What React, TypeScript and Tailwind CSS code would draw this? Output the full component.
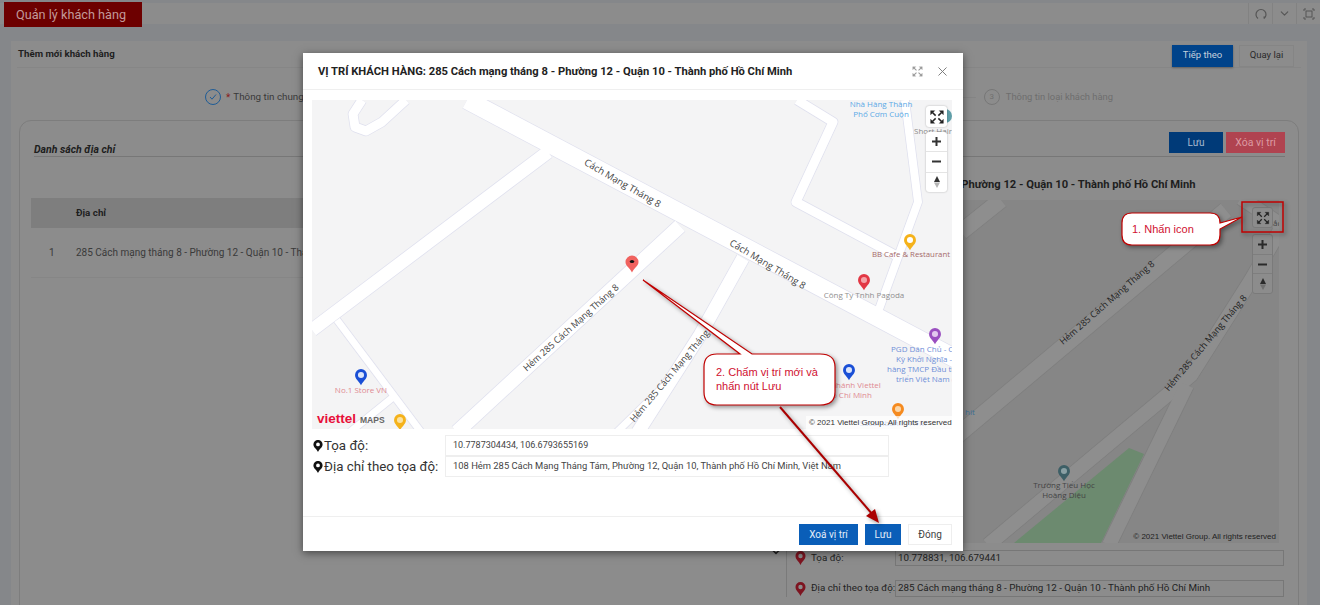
import { ChevronDown, X } from 'lucide-react'

const road = (d: string, w: number, key: string) => (
    <path key={key} d={d} fill="none" stroke="#dfe0ee" strokeWidth={w + 1.5} strokeLinejoin="round" />
)
const roadTop = (d: string, w: number, key: string) => (
    <path key={key} d={d} fill="none" stroke="#ffffff" strokeWidth={w} strokeLinejoin="round" />
)

function Pin({ x, y, color, s = 1, dot = '#ffffff' }: { x: number; y: number; color: string; s?: number; dot?: string }) {
    return (
        <g transform={`translate(${x} ${y}) scale(${s})`}>
            <path d="M0 12 C-2.5 7.5 -7 4.5 -7 0 A7 7 0 1 1 7 0 C7 4.5 2.5 7.5 0 12Z" fill={color} />
            <circle cx="0" cy="0" r="3.6" fill={dot} />
        </g>
    )
}

function FullIcon({ color = '#222222', size = 22 }: { color?: string; size?: number }) {
    return (
        <svg width={size} height={size} viewBox="0 0 22 22" fill={color} stroke={color}>
            {/* four corner arrows */}
            <path d="M4 4h4.5L4 8.5z M18 4h-4.5L18 8.5z M4 18h4.5L4 13.5z M18 18h-4.5L18 13.5z" strokeWidth="0.4" />
            <path d="M6 6l3.5 3.5 M16 6l-3.5 3.5 M6 16l3.5-3.5 M16 16l-3.5-3.5" strokeWidth="1.6" fill="none" />
        </svg>
    )
}

function ZoomGroup({ dim }: { dim?: boolean }) {
    const ink = dim ? '#2a2a2a' : '#333333'
    return (
        <div className={`flex h-[60px] w-[21px] flex-col rounded-[3px] ${dim ? 'border border-[#7a7a7a] bg-[#8c8c8c]' : 'bg-white shadow-[0_0_2px_rgba(0,0,0,0.3)]'}`}>
            <div className={`flex flex-1 items-center justify-center border-b ${dim ? 'border-[#7e7e7e]' : 'border-[#e4e4e4]'}`}>
                <svg width="11" height="11" viewBox="0 0 11 11"><path d="M5.5 1v9M1 5.5h9" stroke={ink} strokeWidth="2" /></svg>
            </div>
            <div className={`flex flex-1 items-center justify-center border-b ${dim ? 'border-[#7e7e7e]' : 'border-[#e4e4e4]'}`}>
                <svg width="11" height="11" viewBox="0 0 11 11"><path d="M1 5.5h9" stroke={ink} strokeWidth="2" /></svg>
            </div>
            <div className="flex flex-1 items-center justify-center">
                <svg width="8" height="14" viewBox="0 0 8 14">
                    <path d="M4 1L7 7H1z" fill={ink} />
                    <path d="M4 13L7 7.6H1z" fill={dim ? '#6f6f6f' : '#b5b5b5'} />
                </svg>
            </div>
        </div>
    )
}

function ModalMap() {
    const roads: [string, number][] = [
        ['M467 100L960 361', 18],
        ['M312 330L548 152', 13],
        ['M337 320L421 432', 7],
        ['M392 398L350 432', 7],
        ['M680 226L457 432', 14],
        ['M638 432L700 335L743 258', 13],
        ['M617 432L662 388', 7],
        ['M797 100L833 122L796 202L895 255', 9],
        ['M905 100L918 202L878 312', 8],
        ['M362 100L353 114L355 127L366 131L382 122L406 100', 9],
    ]
    return (
        <div className="relative mt-[10px] ml-[9px] h-[329px] w-[640px] overflow-hidden bg-[#f4f4f5]">
            <svg className="block" width="640" height="329" viewBox="312 100 640 329" fontFamily="'Open Sans', sans-serif">
                {roads.map(([d, w], i) => road(d, w, `o${i}`))}
                {roads.map(([d, w], i) => roadTop(d, w, `t${i}`))}

                <text x="621" y="186" transform="rotate(30 621 186)" textAnchor="middle" fontSize="9.5" fill="#444">Cách Mạng Tháng 8</text>
                <text x="766" y="267" transform="rotate(31 766 267)" textAnchor="middle" fontSize="9.5" fill="#444">Cách Mạng Tháng 8</text>
                <text x="573" y="330" transform="rotate(-42 573 330)" textAnchor="middle" fontSize="9.2" fill="#444">Hẻm 285 Cách Mạng Tháng 8</text>
                <text x="672" y="378" transform="rotate(-50 672 378)" textAnchor="middle" fontSize="9.2" fill="#444">Hẻm 285 Cách Mạng Tháng</text>

                <text x="881" y="107" textAnchor="middle" fontSize="8" fill="#5aa9e6">Nhà Hàng Thành</text>
                <text x="881" y="117" textAnchor="middle" fontSize="8" fill="#5aa9e6">Phố Cơm Cuộn</text>
                <circle cx="945" cy="116" r="7" fill="#5f9ea8" />
                <text x="933" y="134" textAnchor="middle" fontSize="8" fill="#8a8a8a">Short Hair</text>

                <Pin x={910} y={240} color="#f5b21a" s={0.85} />
                <text x="911" y="257" textAnchor="middle" fontSize="7.8" fill="#a56a6a">BB Cafe &amp; Restaurant</text>
                <Pin x={864} y={280} color="#e23744" s={0.85} dot="#f4a3a8" />
                <text x="864" y="298" textAnchor="middle" fontSize="8" fill="#8f8f8f">Công Ty Tnhh Pagoda</text>
                <Pin x={935} y={334} color="#9a4fc0" s={0.85} dot="#e2c8ee" />
                <g fontSize="8" fill="#6f8fd8">
                    <text x="891" y="352">PGD Dân Chủ - Chi nhánh</text>
                    <text x="896" y="362">Kỳ Khởi Nghĩa -</text>
                    <text x="887" y="372">hàng TMCP Đầu tư và Phát</text>
                    <text x="896" y="382">triển Việt Nam (BIDV)</text>
                </g>
                <Pin x={849} y={370} color="#1a4fd6" s={0.85} dot="#dbe5fb" />
                <text x="849" y="388" textAnchor="middle" fontSize="8" fill="#e08a92">Chi nhánh Viettel</text>
                <text x="849" y="398" textAnchor="middle" fontSize="8" fill="#e08a92">Hồ Chí Minh</text>
                <Pin x={898} y={409} color="#f58a1f" s={0.85} dot="#fbd6a8" />
                <text x="893" y="426" textAnchor="middle" fontSize="8" fill="#6f8fd8">Sacombank - ATM</text>

                <Pin x={361} y={375} color="#1a4fd6" s={0.85} dot="#dbe5fb" />
                <text x="361" y="393" textAnchor="middle" fontSize="8" fill="#e08a92">No.1 Store VN</text>
                <Pin x={400} y={420} color="#f5b21a" s={0.85} dot="#fbe2a0" />

                <text x="317" y="423" fontFamily="'Liberation Sans', sans-serif" fontWeight="700" fontSize="13.5" fill="#e8103a">viettel</text>
                <text x="360" y="423" fontFamily="'Liberation Sans', sans-serif" fontWeight="700" fontSize="8.5" fill="#666">MAPS</text>

                {/* marker */}
                <g transform="translate(632 262)">
                    <path d="M0 10.5 C-2 6 -6.5 4 -6.5 0 A6.5 6.5 0 1 1 6.5 0 C6.5 4 2 6 0 10.5Z" fill="#f0625f" />
                    <ellipse cx="0" cy="-0.5" rx="2.2" ry="1.5" fill="#111" />
                </g>
            </svg>
            <div className="absolute right-0 bottom-0 w-[146px] bg-white/70 pl-[3px] font-['Liberation_Sans',sans-serif] text-[8px] leading-[13px] whitespace-nowrap text-[#333]">© 2021 Viettel Group. All rights reserved</div>
            <div className="absolute top-[6px] right-[5px] flex flex-col gap-[5px]">
                <div className="flex h-[21px] w-[21px] items-center justify-center rounded-[3px] bg-white shadow-[0_0_2px_rgba(0,0,0,0.3)]"><FullIcon size={20} /></div>
                <ZoomGroup />
            </div>
        </div>
    )
}

function DimMap() {
    const roads: [string, number][] = [
        ['M790 575L1225 210', 16],
        ['M987 545L1190 375L1250 280L1282 225', 14],
        ['M1108 545L1186 385', 14],
        ['M1240 198L1282 226', 14],
        ['M960 232L1000 200', 16],
    ]
    return (
        <div className="relative h-[343px] w-[492px] overflow-hidden bg-[#868686]">
            <svg className="block" width="492" height="343" viewBox="786 200 492 343" fontFamily="'Open Sans', sans-serif">
                {roads.map(([d, w], i) => <path key={`a${i}`} d={d} fill="none" stroke="#7e7e7e" strokeWidth={w + 1.5} />)}
                {roads.map(([d, w], i) => <path key={`b${i}`} d={d} fill="none" stroke="#8e8e8e" strokeWidth={w} />)}
                <path d="M1013 543H1100L1143 454L1128 448Z" fill="#6c8a6f" />
                <text x="1108" y="305" transform="rotate(-41 1108 305)" textAnchor="middle" fontSize="9" fill="#222">Hẻm 285 Cách Mạng Tháng 8</text>
                <text x="1207" y="345" transform="rotate(-50 1207 345)" textAnchor="middle" fontSize="9" fill="#222">Hẻm 285 Cách Mạng Tháng 8</text>
                <text x="964" y="415" fontSize="8" fill="#3f6f96">hít</text>
                <text x="1272" y="226" fontSize="8" fill="#444">ắc</text>
                <Pin x={1063} y={471} color="#3d5f66" s={0.85} dot="#8aa0a4" />
                <text x="1063" y="488" textAnchor="middle" fontSize="8" fill="#444">Trường Tiểu Học</text>
                <text x="1063" y="498" textAnchor="middle" fontSize="8" fill="#444">Hoàng Diệu</text>
            </svg>
            <div className="absolute right-[3px] bottom-0 font-['Liberation_Sans',sans-serif] text-[8px] leading-[13px] whitespace-nowrap text-[#222]">© 2021 Viettel Group. All rights reserved</div>
            <div className="absolute top-[7px] right-[6px] flex flex-col gap-[6px]">
                <div className="flex h-[21px] w-[21px] items-center justify-center rounded-[3px] border border-[#7a7a7a] bg-[#8c8c8c]"><FullIcon size={18} /></div>
                <ZoomGroup dim />
            </div>
        </div>
    )
}

function PanelPin() {
    return (
        <svg width="11" height="14" viewBox="0 0 11 14" className="shrink-0">
            <path fillRule="evenodd" d="M5.5 14C4 10.5 .5 8.5 .5 5a5 5 0 0 1 10 0c0 3.500-3.500 5.500-5 9zM5.500 7.200a2.200 2.200 0 1 0 0-4.400 2.200 2.200 0 0 0 0 4.400z" fill="#7d1420" />
        </svg>
    )
}

function ModalPin() {
    return (
        <svg width="10" height="12" viewBox="0 0 10 12" className="shrink-0">
            <path fillRule="evenodd" d="M5 12C3.800 9 .4 7.500 .4 4.500a4.600 4.600 0 0 1 9.200 0C9.600 7.500 6.200 9 5 12zM5 6.300a1.900 1.900 0 1 0 0-3.800 1.900 1.900 0 0 0 0 3.800z" fill="#111" />
        </svg>
    )
}

function Modal() {
    return (
        <div className="absolute top-[53px] left-[303px] flex h-[498px] w-[660px] flex-col bg-white shadow-[0_2px_8px_rgba(0,0,0,0.5)]">
            <div className="flex h-[37px] shrink-0 items-center justify-between border-b border-[#efefef] pr-[13px] pl-[15px]">
                <span className="pt-[3px] text-[11.2px] font-bold text-[#222]">VỊ TRÍ KHÁCH HÀNG: 285 Cách mạng tháng 8 - Phường 12 - Quận 10 - Thành phố Hồ Chí Minh</span>
                <div className="flex items-center gap-[10px]">
                    <FullIcon color="#9a9a9a" size={15} />
                    <X size={15} color="#777" strokeWidth={1.5} />
                </div>
            </div>
            <ModalMap />
            <div className="flex flex-1 flex-col pt-[6px] pl-[10px]">
                <div className="flex items-center">
                    <div className="flex w-[132px] items-center gap-px">
                        <ModalPin />
                        <span className="text-[13.3px] leading-5 text-[#333]">Tọa độ:</span>
                    </div>
                    <div className="flex h-[21px] w-[444px] items-center border border-[#eeeeee] pl-[7px] text-[9px] text-[#444]">10.7787304434, 106.6793655169</div>
                </div>
                <div className="flex items-center">
                    <div className="flex w-[132px] items-center gap-px">
                        <ModalPin />
                        <span className="text-[13.3px] leading-5 whitespace-nowrap text-[#333]">Địa chỉ theo tọa độ:</span>
                    </div>
                    <div className="flex h-[21px] w-[444px] items-center border border-[#eeeeee] pl-[7px] text-[9.4px] text-[#444]">108 Hẻm 285 Cách Mạng Tháng Tám, Phường 12, Quận 10, Thành phố Hồ Chí Minh, Việt Nam</div>
                </div>
            </div>
            <div className="flex h-[35px] shrink-0 items-center justify-end gap-[7px] border-t border-[#efefef] pr-[11px]">
                <button className="flex h-[21px] w-[59px] items-center justify-center bg-[#0a5eb8] text-[10px] text-[#e3edf8]">Xoá vị trí</button>
                <button className="flex h-[21px] w-[36px] items-center justify-center bg-[#0a5eb8] text-[10px] text-[#e3edf8]">Lưu</button>
                <button className="flex h-[21px] w-[44px] items-center justify-center border border-[#eeeeee] bg-white text-[10px] text-[#444]">Đóng</button>
            </div>
        </div>
    )
}

function Annotations() {
    return (
        <>
            <svg className="absolute top-0 left-0" width="1320" height="605" viewBox="0 0 1320 605">
                <g className="drop-shadow-[2px_2px_2px_rgba(0,0,0,0.4)]">
                    <rect x="1242" y="202" width="41" height="30" fill="none" stroke="#c00000" strokeWidth="1.5" />
                    <path d="M1132 213H1210Q1220 213 1220 223L1242 217L1220 229V235Q1220 245 1210 245H1132Q1122 245 1122 235V223Q1122 213 1132 213Z" fill="#fff" stroke="#c00000" strokeWidth="1.2" />
                    <path d="M717 354H740L643 280L752 354H820Q835 354 835 367V392Q835 405 820 405H717Q704 405 704 392V367Q704 354 717 354Z" fill="#fff" stroke="#c00000" strokeWidth="1.2" />
                    <path d="M780 407L873 515" stroke="#aa0000" strokeWidth="2" fill="none" />
                    <path d="M879 523L866 516L875 509Z" fill="#aa0000" />
                </g>
            </svg>
            <div className="absolute top-[222px] left-[1132px] font-['Liberation_Sans',sans-serif] text-[11px] leading-[14px] text-[#d01030]">1. Nhấn icon</div>
            <div className="absolute top-[366px] left-[716px] font-['Liberation_Sans',sans-serif] text-[11px] leading-[13.5px] text-[#d01030]">2. Chấm vị trí mới và<br />nhấn nút Lưu</div>
        </>
    )
}

export default function App() {
    return (
        <div className="relative h-[605px] w-[1320px] overflow-hidden bg-[#85878a] font-['Roboto',sans-serif]">
            {/* Top bar */}
            <div className="mt-[3px] flex h-[21px] items-start justify-between bg-[#8c8c8c]">
                <div className="-mt-px ml-[4px] flex h-[25px] w-[138px] items-center bg-[#6d0000] pl-[12px] text-[12.7px] text-[#c29a9a]">Quản lý khách hàng</div>
                <div className="flex h-[21px] text-[#555]">
                    <div className="flex w-[24px] items-center justify-center border-l border-[#828282]">
                        <svg width="12" height="12" viewBox="0 0 12 12" fill="none"><path d="M3 10.500A5 5 0 1 1 9 10.500M9 10.500l.3-2.200" stroke="#555" strokeWidth="1.2" /></svg>
                    </div>
                    <div className="flex w-[24px] items-center justify-center border-l border-[#828282]"><ChevronDown size={13} /></div>
                    <div className="flex w-[24px] items-center justify-center border-l border-[#828282]">
                        <svg width="12" height="12" viewBox="0 0 12 12" fill="none" stroke="#555"><path d="M1 3V1H3M9 1H11V3M11 9V11H9M3 11H1V9" /><rect x="3" y="3" width="6" height="6" /></svg>
                    </div>
                </div>
            </div>

            {/* Main card */}
            <div className="mt-[17px] ml-[11px] h-[564px] w-[1296px] bg-[#8c8c8c] px-[6px]">
                <div className="flex h-[27px] items-center justify-between border-b border-[#868686]">
                    <span className="pl-px text-[9.7px] font-bold text-[#1e1e1e]">Thêm mới khách hàng</span>
                    <div className="flex items-center gap-[6px] pt-[3px] pr-[7px]">
                        <button className="flex h-[22px] w-[61px] items-center justify-center bg-[#00438a] text-[9.5px] text-[#c5d0dc] shadow-[0_1px_2px_rgba(0,0,0,0.3)]">Tiếp theo</button>
                        <button className="flex h-[22px] w-[55px] items-center justify-center border border-[#858585] text-[9.5px] text-[#2a2a2a]">Quay lại</button>
                    </div>
                </div>

                {/* Stepper */}
                <div className="flex h-[52px] items-center pt-[6px] pr-[188px] pl-[188px]">
                    <div className="flex h-4 w-4 shrink-0 items-center justify-center rounded-full border border-[#1f5c96]">
                        <svg width="8" height="8" viewBox="0 0 8 8" fill="none"><path d="M1 4l2 2.200L7 1.500" stroke="#1f5c96" /></svg>
                    </div>
                    <span className="ml-[5px] text-[10px] text-[#8a1c1c]">*</span>
                    <span className="ml-[3px] text-[9.8px] whitespace-nowrap text-[#3a3a3a]">Thông tin chung</span>
                    <div className="mx-2 h-px flex-1 bg-[#858585]" />
                    <div className="flex h-4 w-4 shrink-0 items-center justify-center rounded-full border border-[#777] text-[8px] text-[#707070]">3</div>
                    <span className="ml-[6px] text-[9.4px] whitespace-nowrap text-[#6e6e6e]">Thông tin loại khách hàng</span>
                </div>

                {/* Inner card */}
                <div className="mx-[2px] h-[500px] rounded-t-xl border border-[#7d7d7d] px-[11px] pt-[11px]">
                    <div className="ml-[3px] flex h-[25px] w-[1251px] items-start justify-between border-b border-[#777]">
                        <span className="pt-[11px] text-[10.5px] leading-[13px] font-bold text-[#1e1e1e] italic">Danh sách địa chỉ</span>
                        <div className="flex gap-[3px]">
                            <button className="flex h-[21px] w-[54px] items-center justify-center bg-[#003a78] text-[10px] text-[#a9bad0]">Lưu</button>
                            <button className="flex h-[21px] w-[59px] items-center justify-center bg-[#b04350] text-[10.5px] text-[#dc9aa2]">Xóa vị trí</button>
                        </div>
                    </div>
                    <div className="flex">
                        <div className="w-[755px] pt-[41px]">
                            <div className="flex h-[30px] items-center bg-[#7e7e7e] pl-[45px] text-[9.8px] font-bold text-[#1e1e1e]">Địa chỉ</div>
                            <div className="flex h-[50px] items-center border-b border-[#868686] text-[10px] text-[#3a3a3a]">
                                <span className="w-[45px] pl-[18px]">1</span>
                                <span>285 Cách mạng tháng 8 - Phường 12 - Quận 10 - Thành phố Hồ Chí Minh</span>
                            </div>
                            <div className="mt-[268px] flex justify-end pr-[4px]"><ChevronDown size={12} color="#222" strokeWidth={3} /></div>
                        </div>
                        <div className="flex-1 border-l border-[#7a7a7a]">
                            <div className="h-[43px] pt-[21px] pl-[45px] text-[11.2px] leading-[14px] font-bold whitespace-nowrap text-[#1e1e1e]">285 Cách mạng tháng 8 - Phường 12 - Quận 10 - Thành phố Hồ Chí Minh</div>
                            <DimMap />
                            <div className="mt-[7px] mr-[3px] flex h-[16px] items-center pl-[8px]">
                                <PanelPin />
                                <span className="ml-[5px] w-[84px] text-[9.8px] text-[#222]">Tọa độ:</span>
                                <div className="flex h-[16px] flex-1 items-center border border-[#777] pl-[2px] text-[9.8px] text-[#222]">10.778831, 106.679441</div>
                            </div>
                            <div className="mt-[14px] mr-[3px] flex h-[17px] items-center pl-[8px]">
                                <PanelPin />
                                <span className="ml-[5px] w-[84px] text-[9.8px] whitespace-nowrap text-[#222]">Địa chỉ theo tọa độ:</span>
                                <div className="flex h-[17px] flex-1 items-center border border-[#777] pl-[2px] text-[9.8px] text-[#222]">285 Cách mạng tháng 8 - Phường 12 - Quận 10 - Thành phố Hồ Chí Minh</div>
                            </div>
                        </div>
                    </div>
                </div>
            </div>

            <Modal />
            <Annotations />
        </div>
    )
}
